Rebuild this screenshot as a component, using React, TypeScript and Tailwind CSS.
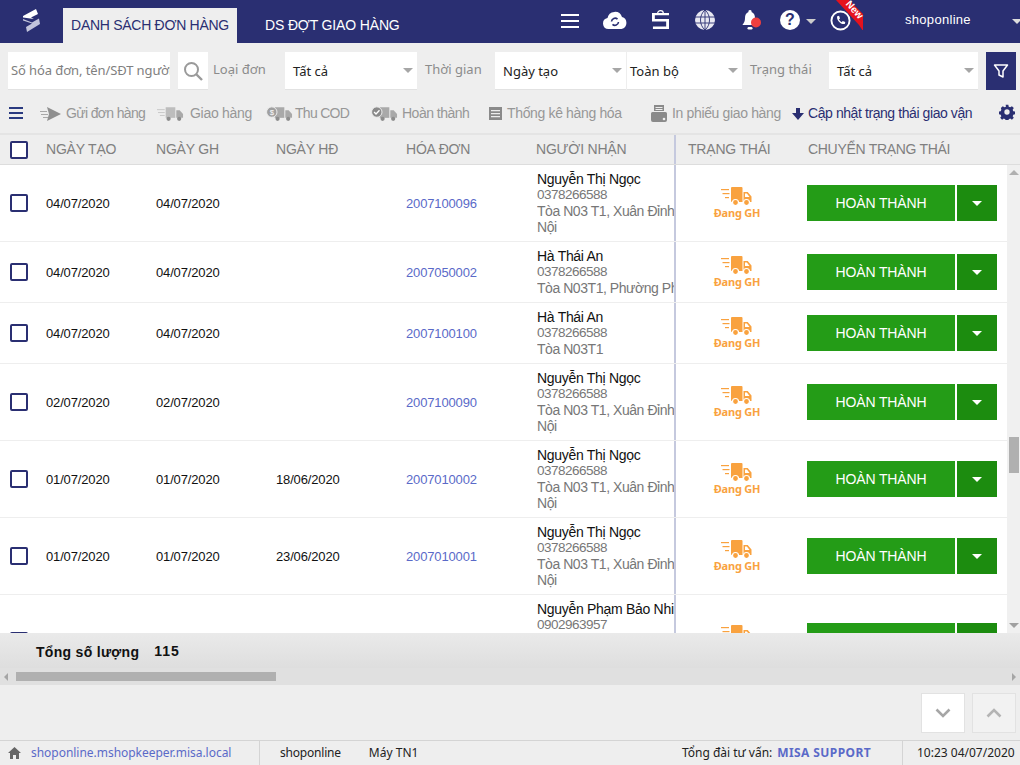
import React from "react";

const ARIAL = "font-['Liberation_Sans',Arial,sans-serif]";
const NOTO = "font-['Noto_Sans',sans-serif]";

function Truck({ color = "#f9a23f", lines = true, className = "" }: { color?: string; lines?: boolean; className?: string }) {
  return (
    <svg viewBox="0 0 32 20" width="32" height="20" className={className}>
      {lines && (
        <g fill={color}>
          <rect x="0" y="3" width="8" height="1.2" />
          <rect x="1.5" y="7" width="7" height="1.2" />
          <rect x="4" y="11" width="4" height="1.2" />
        </g>
      )}
      <path d="M11 1h9.5a1 1 0 0 1 1 1v14H11a1 1 0 0 1-1-1V2a1 1 0 0 1 1-1z" fill={color} />
      <path d="M22.5 6h4.2L30.5 10.5V16h-8zM24 7.5v3.5h4.5l-2.6-3.5z" fill={color} fillRule="evenodd" />
      <circle cx="14.5" cy="16.5" r="3" fill={color} stroke="#fff" strokeWidth="1.2" />
      <circle cx="25.5" cy="16.5" r="3" fill={color} stroke="#fff" strokeWidth="1.2" />
    </svg>
  );
}

function ToolTruck({ badge }: { badge?: "lines" | "cod" | "ok" }) {
  const c = "#a9a9a9";
  return (
    <svg viewBox="0 0 28 16" width="27" height="16">
      {badge === "lines" && (
        <g fill="#c8c8c8">
          <rect x="0" y="3" width="8" height="1" />
          <rect x="1" y="6" width="7" height="1" />
          <rect x="3" y="9" width="5" height="1" />
        </g>
      )}
      <rect x="9" y="1" width="10" height="11" fill={badge === "lines" ? "#bdbdbd" : c} />
      <path d="M20 4h3.5L27 8v4h-7z" fill={c} />
      <circle cx="12" cy="13" r="2.2" fill="#8d8d8d" />
      <circle cx="23" cy="13" r="2.2" fill="#8d8d8d" />
      {badge === "cod" && (
        <g>
          <circle cx="6" cy="6" r="5.4" fill="#a0a0a0" stroke="#eee" />
          <text x="6" y="9" fontSize="8" fill="#fff" textAnchor="middle" fontFamily="Liberation Sans">$</text>
        </g>
      )}
      {badge === "ok" && (
        <g>
          <circle cx="6" cy="6" r="5.4" fill="#8a8a8a" stroke="#eee" />
          <path d="M3.2 6l2 2 3.6-3.8" fill="none" stroke="#fff" strokeWidth="1.4" />
        </g>
      )}
    </svg>
  );
}

function Caret({ className = "" }: { className?: string }) {
  return <span className={`w-0 h-0 border-l-[5px] border-r-[5px] border-t-[5px] border-l-transparent border-r-transparent ${className}`} />;
}

function Select({ text, className = "" }: { text: string; className?: string }) {
  return (
    <div className={`h-[38px] bg-white border-b border-[#e2e2e2] flex items-center justify-between pl-2 pr-[3px] text-[13px] text-[#222] ${NOTO} ${className}`}>
      <span className="pt-[2px]">{text}</span>
      <Caret className="border-t-[#a6a6a6] mr-[1px]" />
    </div>
  );
}

function Label({ text, className = "" }: { text: string; className?: string }) {
  return <span className={`text-[13px] text-[#8b8b8b] leading-[35px] h-[38px] ${NOTO} ${className}`}>{text}</span>;
}

function Tool({ icon, text, className = "", dark = false, track }: { icon: React.ReactNode; text: string; className?: string; dark?: boolean; track: string }) {
  return (
    <div className={`flex items-center absolute top-0 h-full ${className}`}>
      {icon}
      <span className={`text-[14px] whitespace-nowrap ${track} ${dark ? "text-[#2a2f72]" : "text-[#979797]"}`}>{text}</span>
    </div>
  );
}

function Checkbox() {
  return <span className="w-[18px] h-[18px] border-2 border-[#2a2f72] rounded-[2px] bg-white block" />;
}

type Row = { a?: string; b?: string; c?: string; id?: string; name: string; phone: string; addr: string[]; h: number; clipped?: boolean };
const addr1 = ["Tòa N03 T1, Xuân Đỉnh, Hà", "Nội"];
const rows: Row[] = [
  { a: "04/07/2020", b: "04/07/2020", id: "2007100096", name: "Nguyễn Thị Ngọc", phone: "0378266588", addr: addr1, h: 77 },
  { a: "04/07/2020", b: "04/07/2020", id: "2007050002", name: "Hà Thái An", phone: "0378266588", addr: ["Tòa N03T1, Phường Phú"], h: 61 },
  { a: "04/07/2020", b: "04/07/2020", id: "2007100100", name: "Hà Thái An", phone: "0378266588", addr: ["Tòa N03T1"], h: 61 },
  { a: "02/07/2020", b: "02/07/2020", id: "2007100090", name: "Nguyễn Thị Ngọc", phone: "0378266588", addr: addr1, h: 77 },
  { a: "01/07/2020", b: "01/07/2020", c: "18/06/2020", id: "2007010002", name: "Nguyễn Thị Ngọc", phone: "0378266588", addr: addr1, h: 77 },
  { a: "01/07/2020", b: "01/07/2020", c: "23/06/2020", id: "2007010001", name: "Nguyễn Thị Ngọc", phone: "0378266588", addr: addr1, h: 77 },
  { name: "Nguyễn Phạm Bảo Nhi", phone: "0902963957", addr: [], h: 93, clipped: true },
];

function TableRow({ r }: { r: Row }) {
  return (
    <div className="flex items-center border-b border-[#eeeeee] text-[13px] text-[#111] tracking-[-0.15px] shrink-0" style={{ height: r.h }}>
      <div className="w-[46px] pl-[10px] shrink-0"><Checkbox /></div>
      <div className="w-[110px] shrink-0 pt-[1px]">{r.a}</div>
      <div className="w-[120px] shrink-0 pt-[1px]">{r.b}</div>
      <div className="w-[130px] shrink-0 pt-[1px]">{r.c}</div>
      <div className="w-[131px] shrink-0 pt-[1px] text-[#5a6ac8]">{r.id}</div>
      <div className={`w-[137px] shrink-0 overflow-hidden whitespace-nowrap leading-[16px] text-[#777] text-[14px] tracking-[-0.45px] ${r.clipped ? "h-[80px]" : ""}`}>
        <div className="text-[#111] text-[14px] tracking-[-0.3px]">{r.name}</div>
        <div className="text-[13.5px] tracking-[-0.5px]">{r.phone}</div>
        {r.addr.map((l) => <div key={l}>{l}</div>)}
      </div>
      <div className="w-[2px] self-stretch bg-[#c5c9de] shrink-0" />
      <div className="w-[131px] shrink-0 flex flex-col items-center pr-[9px]">
        <Truck className="-mt-[1px]" />
        {r.clipped ? <span className="h-[14px]" /> : <span className={`text-[11px] font-bold text-[#f9a23f] tracking-[-0.2px] leading-[14px] ${NOTO}`}>Đang GH</span>}
      </div>
      <div className="flex shrink-0 gap-[2px]">
        <button className={`w-[148px] h-[36px] bg-[#249c17] text-white text-[14px] flex items-center justify-center ${ARIAL}`}>{r.clipped ? "" : "HOÀN THÀNH"}</button>
        <button className="w-[40px] h-[36px] bg-[#1c8c0f] flex items-center justify-center"><Caret className="border-t-white" /></button>
      </div>
    </div>
  );
}

const HeadCell = ({ w, text }: { w: string; text: string }) => <div className={`${w} shrink-0`}>{text}</div>;

export default function App() {
  return (
    <div className={`w-[1020px] h-[765px] flex flex-col overflow-hidden bg-[#eeeeee] ${ARIAL}`}>
      {/* Top bar */}
      <header className="h-[43px] bg-[#2a2f72] flex items-end relative shrink-0 text-white">
        <svg viewBox="0 0 20 26" width="20" height="26" className="absolute left-[21px] top-[8px]">
          <path d="M15 1l2 5-7 3.500 3 1.500L2 9.500 2 8z" fill="#ffffff" />
          <path d="M2 11l9 3.500 7-4 1 5.500L6 24l-1-5 6-3.500-9-3z" fill="#c3c5dc" />
        </svg>
        <div className="ml-[63px] w-[174px] h-[35px] bg-[#eeeeee] text-[#2a2f72] text-[14px] tracking-[-0.28px] flex items-center justify-center">DANH SÁCH ĐƠN HÀNG</div>
        <div className="ml-[28px] h-[35px] flex items-center text-[14px] tracking-[-0.15px]">DS ĐỢT GIAO HÀNG</div>
        <div className="flex-1" />
        <div className="absolute inset-0 pointer-events-none">
          <svg viewBox="0 0 18 14" width="18" height="14" className="absolute left-[561px] top-[14px]"><g fill="#fff"><rect width="18" height="2" /><rect y="6" width="18" height="2" /><rect y="12" width="18" height="2" /></g></svg>
          <svg viewBox="0 0 24 18" width="24" height="18" className="absolute left-[603px] top-[11px]">
            <path d="M5.500 18a5.500 5.500 0 0 1-1-10.900A7.500 7.500 0 0 1 19 6 6.200 6.200 0 0 1 18.500 18z" fill="#fff" />
            <path d="M8.500 10.500a3.600 3.600 0 0 1 6-2.400M15.500 11a3.600 3.600 0 0 1-6 2.400" fill="none" stroke="#2a2f72" strokeWidth="1.600" />
          </svg>
          <svg viewBox="0 0 18 21" width="17" height="21" className="absolute left-[652px] top-[9px]">
            <path d="M6 4a3 3 0 0 1 6 0" fill="none" stroke="#fff" strokeWidth="1.300" />
            <path d="M0 3.500h18v2.500H3v4h15v10.500H1v-2.500h14v-5.500H0z" fill="#fff" />
          </svg>
          <svg viewBox="0 0 20 20" width="20" height="20" className="absolute left-[695px] top-[10px]">
            <circle cx="10" cy="10" r="10" fill="#e8e8f2" />
            <path d="M0 7h20M0 13h20M10 0v20M10 0c-6 5-6 15 0 20M10 0c6 5 6 15 0 20" fill="none" stroke="#2a2f72" strokeWidth="0.900" />
          </svg>
          <svg viewBox="0 0 22 20" width="22" height="20" className="absolute left-[741px] top-[10px]">
            <path d="M9 0a1.500 1.500 0 0 1 1.500 2C13 3 14 5 14 8c0 4 1.500 5 2.500 7h-15C2.500 13 4 12 4 8c0-3 1-5 3.500-6A1.500 1.500 0 0 1 9 0z" fill="#fff" />
            <rect x="6.500" y="17" width="5" height="2.500" rx="1.200" fill="#fff" />
            <circle cx="15" cy="12.500" r="5" fill="#ef3f3f" />
          </svg>
          <div className="absolute left-[780px] top-[10px] w-[20px] h-[20px] rounded-full bg-white text-[#2a2f72] text-[16px] font-bold flex items-center justify-center">?</div>
          <Caret className="absolute left-[806px] top-[19px] border-t-[#ccc] border-l-[3.5px] border-r-[3.5px] border-t-[4px]" />
          <svg viewBox="0 0 22 22" width="21" height="21" className="absolute left-[830px] top-[10px]">
            <circle cx="11" cy="11" r="9.500" fill="none" stroke="#fff" strokeWidth="2" />
            <path d="M7.500 6.500l2 -.5 1 2.800-1.200 1c.6 1.300 1.600 2.300 3 3l1-1.200 2.700 1-.5 2c-4 1-9-4-8-8.100z" fill="#fff" />
          </svg>
          <svg viewBox="0 0 28 30" width="28" height="30" className="absolute left-[836px] top-0">
            <path d="M0 0h13l14 14 0 17-4-6z" fill="#e5121d" />
          </svg>
          <span className="absolute left-[844px] top-[5px] text-[10px] font-bold text-white rotate-[48deg] leading-none">New</span>
          <span className={`absolute left-[905px] top-[11px] text-[13px] tracking-[0.3px] leading-[18px] ${ARIAL}`}>shoponline</span>
          <Caret className="absolute left-[1012px] top-[19px] border-t-[#ddd] border-l-[4px] border-r-[4px]" />
        </div>
      </header>

      {/* Filters */}
      <div className="h-[54px] shrink-0 pt-[9px] pl-[8px] flex items-start">
        <div className={`w-[162px] h-[38px] bg-white border-b border-[#e2e2e2] flex items-center pl-[3px] text-[13px] text-[#808080] overflow-hidden whitespace-nowrap tracking-[-0.1px] ${NOTO}`}>Số hóa đơn, tên/SĐT người nhận</div>
        <div className="ml-[8px] w-[30px] h-[38px] bg-white border-b border-[#e2e2e2] flex items-center justify-center">
          <svg viewBox="0 0 20 20" width="20" height="20"><circle cx="8.500" cy="8.500" r="6.500" fill="none" stroke="#9a9a9a" strokeWidth="2" /><path d="M13 13l6 6" stroke="#9a9a9a" strokeWidth="2.400" /></svg>
        </div>
        <Label text="Loại đơn" className="ml-[5px] w-[72px]" />
        <Select text="Tất cả" className="w-[132px]" />
        <Label text="Thời gian" className="ml-[8px] w-[70px]" />
        <Select text="Ngày tạo" className="w-[131px]" />
        <Select text="Toàn bộ" className="w-[115px] ml-[1px] !pl-[3px]" />
        <Label text="Trạng thái" className="ml-[8px] w-[79px]" />
        <Select text="Tất cả" className="w-[149px]" />
        <div className="ml-[8px] w-[30px] h-[38px] bg-[#2a2f72] flex items-center justify-center">
          <svg viewBox="0 0 16 16" width="16" height="16"><path d="M1.500 2h13L10 8v6l-4-2V8z" fill="none" stroke="#fff" strokeWidth="1.500" strokeLinejoin="round" /></svg>
        </div>
      </div>

      {/* Toolbar */}
      <div className="h-[33px] shrink-0 relative">
        <svg viewBox="0 0 14 12" width="14" height="12" className="absolute left-[9px] top-[10px]"><g fill="#2a3a80"><rect width="14" height="2" /><rect y="5" width="14" height="2" /><rect y="10" width="14" height="2" /></g></svg>
        <Tool className="left-[40px]" track="tracking-[-0.65px]" text="Gửi đơn hàng" icon={
          <svg viewBox="0 0 21 14" width="21" height="14" className="mr-[5px]"><path d="M7 0l14 7-14 7 2-7z" fill="#8f8f8f" /><g fill="#a8a8a8"><rect x="0" y="4" width="7" height="1" /><rect x="1" y="7" width="7" height="1" /><rect x="3" y="10" width="5" height="1" /></g></svg>
        } />
        <Tool className="left-[157px]" track="tracking-[-0.3px]" text="Giao hàng" icon={<span className="mr-[6px] flex"><ToolTruck badge="lines" /></span>} />
        <Tool className="left-[266px]" track="tracking-[-0.7px]" text="Thu COD" icon={<span className="mr-[2px] flex"><ToolTruck badge="cod" /></span>} />
        <Tool className="left-[371px]" track="tracking-[-0.5px]" text="Hoàn thành" icon={<span className="mr-[4px] flex"><ToolTruck badge="ok" /></span>} />
        <Tool className="left-[489px]" track="tracking-[-0.35px]" text="Thống kê hàng hóa" icon={
          <svg viewBox="0 0 13 13" width="13" height="13" className="mr-[5px]"><path d="M0 0h13v13H0zM2 3v1.300h9V3zm0 3v1.300h9V6zm0 3v1.300h9V9z" fill="#8a8a8a" fillRule="evenodd" /></svg>
        } />
        <Tool className="left-[651px]" track="tracking-[-0.35px]" text="In phiếu giao hàng" icon={
          <svg viewBox="0 0 16 17" width="16" height="17" className="mr-[5px]"><path d="M3 0h10v6H3zM1.500 7h13A1.500 1.500 0 0 1 16 8.500V15a2 2 0 0 1-2 2H2a2 2 0 0 1-2-2V8.500A1.500 1.500 0 0 1 1.500 7z" fill="#8a8a8a" /><rect x="4.500" y="2" width="7" height="1" fill="#eee" /><rect x="4.500" y="4" width="7" height="1" fill="#eee" /><circle cx="13" cy="14" r="1.300" fill="#eee" /></svg>
        } />
        <Tool dark className="left-[792px]" track="tracking-[-0.42px]" text="Cập nhật trạng thái giao vận" icon={
          <svg viewBox="0 0 12 12" width="12" height="12" className="mr-[4px]"><path d="M4 0h4v5h4l-6 7-6-7h4z" fill="#2a2f72" /></svg>
        } />
        <svg viewBox="0 0 24 24" width="16" height="16" className="absolute left-[999px] top-[7px]">
          <path fillRule="evenodd" fill="#2a2f72" d="M10 1h4l.6 3 2.200.9 2.600-1.700 2.800 2.800-1.700 2.600.9 2.200 3 .6v4l-3 .6-.9 2.200 1.700 2.600-2.800 2.800-2.600-1.700-2.200.9-.6 3h-4l-.6-3-2.200-.9-2.600 1.700-2.800-2.800 1.700-2.600-.9-2.200-3-.6v-4l3-.6.9-2.200L2.800 6l2.800-2.800 2.600 1.700L10.400 4zM12 8a4 4 0 1 0 0 8 4 4 0 0 0 0-8z" />
        </svg>
      </div>

      {/* Table header */}
      <div className="h-[32px] mt-[3px] shrink-0 flex items-center bg-[#eeeeee] border-b border-[#dddddd] border-t-2 border-t-[#e4e4e4] text-[14px] text-[#808080] tracking-[-0.2px] box-border">
        <div className="w-[46px] pl-[10px] shrink-0"><Checkbox /></div>
        <HeadCell w="w-[110px]" text="NGÀY TẠO" />
        <HeadCell w="w-[120px]" text="NGÀY GH" />
        <HeadCell w="w-[130px]" text="NGÀY HĐ" />
        <HeadCell w="w-[130px]" text="HÓA ĐƠN" />
        <HeadCell w="w-[138px]" text="NGƯỜI NHẬN" />
        <div className="w-[2px] self-stretch bg-[#c5c9de] shrink-0" />
        <div className="w-[131px] pl-[12px] shrink-0">TRẠNG THÁI</div>
        <div className="pl-[1px] tracking-[-0.3px]">CHUYỂN TRẠNG THÁI</div>
      </div>

      {/* Table body */}
      <div className="h-[468px] shrink-0 flex overflow-hidden bg-white">
        <div className="w-[1007px] shrink-0 flex flex-col overflow-hidden">
          {rows.map((r, i) => <TableRow key={i} r={r} />)}
        </div>
        <div className="w-[13px] bg-[#f0f0f0] relative flex-col flex items-center justify-between py-[5px]">
          <Caret className="!border-t-0 border-b-[5px] border-b-[#b0b0b0]" />
          <div className="absolute left-[2px] top-[272px] w-[10px] h-[36px] bg-[#b0b0b0]" />
          <Caret className="border-t-[#a0a0a0]" />
        </div>
      </div>

      {/* Summary */}
      <div className="h-[35px] shrink-0 bg-gradient-to-b from-[#eaeaea] to-[#dedede] flex items-center pl-[36px] text-[14px] font-bold text-[#111] pt-[3px]">
        <span className="tracking-[0.3px]">Tổng số lượng</span>
        <span className="ml-[15px] tracking-[1px] -mt-[2px]">115</span>
      </div>
      <div className="h-[17px] shrink-0 bg-[#e0e0e0] flex items-center">
        <span className="ml-[4px] w-0 h-0 border-y-[4px] border-r-[4px] border-y-transparent border-r-[#a5a5a5]" />
        <div className="ml-[8px] w-[260px] h-[9px] bg-[#b0b0b0]" />
        <div className="flex-1" />
        <span className="mr-[4px] w-0 h-0 border-y-[4px] border-l-[4px] border-y-transparent border-l-[#a5a5a5]" />
      </div>

      {/* Pager */}
      <div className="h-[56px] shrink-0 flex justify-end items-start pt-[8px] pr-[4px] gap-[7px] border-b border-[#d4d4d4]">
        <button className="w-[44px] h-[40px] bg-white border border-[#e2e2e2] flex items-center justify-center">
          <svg viewBox="0 0 16 10" width="16" height="10"><path d="M1.500 1.500L8 8l6.500-6.500" fill="none" stroke="#a6a6a6" strokeWidth="2.600" /></svg>
        </button>
        <button className="w-[44px] h-[40px] bg-[#f2f2f2] border border-[#e2e2e2] flex items-center justify-center">
          <svg viewBox="0 0 16 10" width="16" height="10"><path d="M1.500 8.500L8 2l6.500 6.500" fill="none" stroke="#b4b4b4" strokeWidth="2.600" /></svg>
        </button>
      </div>

      {/* Status bar */}
      <div className={`flex-1 flex items-center text-[12px] text-[#222] ${NOTO}`}>
        <div className="w-[260px] shrink-0 h-full flex items-center pl-[8px] border-r border-[#d4d4d4]">
          <svg viewBox="0 0 13 12" width="13" height="12"><path d="M6.500 0L13 6h-2v6H8V8H5v4H2V6H0z" fill="#666" /></svg>
          <span className="ml-[10px] text-[#5a6ac8] tracking-[-0.03px]">shoponline.mshopkeeper.misa.local</span>
        </div>
        <span className="ml-[20px] tracking-[-0.2px]">shoponline</span>
        <span className="ml-[28px]">Máy TN1</span>
        <div className="flex-1" />
        <span>Tổng đài tư vấn:</span>
        <span className="ml-[5px] font-bold text-[#5a6ac8] tracking-[0.4px]">MISA SUPPORT</span>
        <div className="ml-[31px] w-[118px] shrink-0 h-full flex items-center pl-[14px] border-l border-[#d4d4d4]">10:23 04/07/2020</div>
      </div>
    </div>
  );
}
